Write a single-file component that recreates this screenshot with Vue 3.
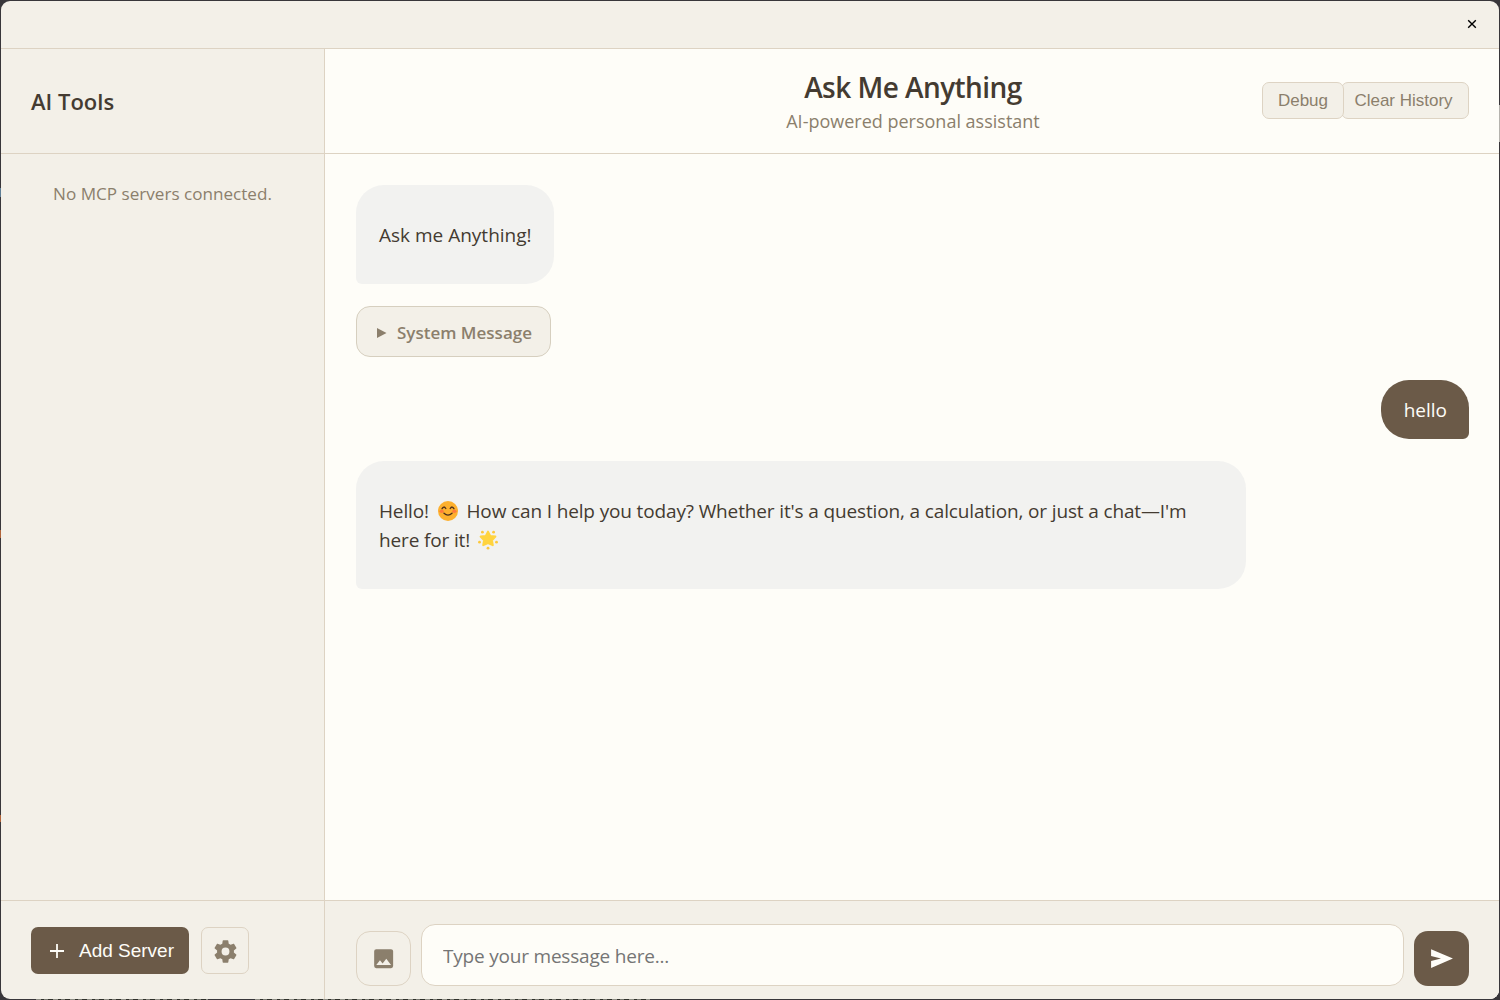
<script setup>
import { ref } from 'vue'

const draft = ref('')
</script>

<template>
  <div class="desktop">
    <div class="window">
      <div class="titlebar">
        <button class="close" aria-label="Close">
          <svg width="10" height="10" viewBox="0 0 10 10"><path d="M1.2 1.2 8.8 8.8M8.8 1.2 1.2 8.8" /></svg>
        </button>
      </div>

      <div class="body">
        <aside class="sidebar">
          <header class="side-head"><h2>AI Tools</h2></header>
          <div class="servers"><p>No MCP servers connected.</p></div>
          <footer class="side-foot">
            <button class="add">
              <svg width="14" height="14" viewBox="0 0 14 14"><path d="M7 0V14M0 7H14" /></svg>
              <span>Add Server</span>
            </button>
            <button class="gear" aria-label="Settings">
              <svg width="27" height="27" viewBox="0 0 24 24"><path d="M12,15.5A3.5,3.5 0 0,1 8.5,12A3.5,3.5 0 0,1 12,8.5A3.5,3.5 0 0,1 15.5,12A3.5,3.5 0 0,1 12,15.5M19.43,12.97C19.47,12.65 19.5,12.33 19.5,12C19.5,11.67 19.47,11.34 19.43,11L21.54,9.37C21.73,9.22 21.78,8.95 21.66,8.73L19.66,5.27C19.54,5.05 19.27,4.96 19.05,5.05L16.56,6.05C16.04,5.66 15.5,5.32 14.87,5.07L14.5,2.42C14.46,2.18 14.25,2 14,2H10C9.75,2 9.54,2.18 9.5,2.42L9.13,5.07C8.5,5.32 7.96,5.66 7.44,6.05L4.95,5.05C4.73,4.96 4.46,5.05 4.34,5.27L2.34,8.73C2.21,8.95 2.27,9.22 2.46,9.37L4.57,11C4.53,11.34 4.5,11.67 4.5,12C4.5,12.33 4.53,12.65 4.57,12.97L2.46,14.63C2.27,14.78 2.21,15.05 2.34,15.27L4.34,18.73C4.46,18.95 4.73,19.03 4.95,18.95L7.44,17.94C7.96,18.34 8.5,18.68 9.13,18.93L9.5,21.58C9.54,21.82 9.75,22 10,22H14C14.25,22 14.46,21.82 14.5,21.58L14.87,18.93C15.5,18.67 16.04,18.34 16.56,17.94L19.05,18.95C19.27,19.03 19.54,18.95 19.66,18.73L21.66,15.27C21.78,15.05 21.73,14.78 21.54,14.63L19.43,12.97Z" /></svg>
            </button>
          </footer>
        </aside>

        <main class="chat">
          <header class="chat-head">
            <div class="heading">
              <h1>Ask Me Anything</h1>
              <p>AI-powered personal assistant</p>
            </div>
            <div class="actions">
              <button class="debug">Debug</button>
              <button class="clear">Clear History</button>
            </div>
          </header>

          <section class="messages">
            <div class="bubble bot"><p>Ask me Anything!</p></div>
            <div class="system">
              <svg width="10" height="10" viewBox="0 0 10 10"><path d="M0 0 9.5 5 0 10Z" /></svg>
              <span>System Message</span>
            </div>
            <div class="bubble user">hello</div>
            <div class="bubble bot">
              <p class="long">Hello! <svg class="emoji smile" width="20" height="20" viewBox="0 0 20 20">
                <circle cx="10" cy="10" r="10" fill="#fdb02e" />
                <ellipse cx="3.7" cy="10.3" rx="2.2" ry="1.6" fill="#ff7a3d" />
                <ellipse cx="16.3" cy="10.3" rx="2.2" ry="1.6" fill="#ff7a3d" />
                <path d="M4 7.8Q5.8 4.4 7.8 7.5M12.2 7.5Q14.2 4.4 16 7.8M6 12.2Q10 16 14 12.2" fill="none" stroke="#4a2d1c" stroke-width="1.3" stroke-linecap="round" />
              </svg> How can I help you today? Whether it's a question, a calculation, or just a chat—I'm<br>
              here for it! <svg class="emoji" width="20" height="20" viewBox="0 0 20 20">
                <g fill="#ffd43f" stroke="#ffd43f" stroke-width="2" stroke-linejoin="round">
                  <path d="M10 1.6 12.2 6 17.4 6.6 13.9 10.2 14.8 15.2 10 13 5.2 15.2 6.1 10.2 2.6 6.6 7.8 6Z" />
                </g>
                <g fill="#fdc83a">
                  <circle cx="4.4" cy="2.2" r="1.4" /><circle cx="15.6" cy="2.2" r="1.4" />
                  <circle cx="1.5" cy="12.2" r="1.4" /><circle cx="18.5" cy="12.2" r="1.4" />
                  <circle cx="10" cy="18.2" r="1.4" />
                </g>
              </svg></p>
            </div>
          </section>

          <footer class="composer">
            <button class="image" aria-label="Attach image">
              <svg width="25.3" height="25.3" viewBox="0 0 24 24"><path d="M8.5,13.5L11,16.5L14.5,12L19,18H5M21,19V5C21,3.89 20.1,3 19,3H5A2,2 0 0,0 3,5V19A2,2 0 0,0 5,21H19A2,2 0 0,0 21,19Z" /></svg>
            </button>
            <input v-model="draft" type="text" placeholder="Type your message here...">
            <button class="send" aria-label="Send">
              <svg width="25" height="25" viewBox="0 0 24 24"><path d="M2,21 23,12 2,3V9.6L11.5,12 2,14.4Z" /></svg>
            </button>
          </footer>
        </main>
      </div>
    </div>
  </div>
</template>

<style>
body {
  margin: 0;
  overflow: hidden;
}
</style>

<style scoped>
* {
  box-sizing: border-box;
}

.desktop {
  height: 1000px;
  padding: 1px;
  background:
    linear-gradient(#b5b3ae, #b5b3ae) right 0 top 105px / 1px 37px no-repeat,
    linear-gradient(#5f7f96, #5f7f96) 0 188px / 1px 9px no-repeat,
    linear-gradient(#b0643a, #b0643a) 0 530px / 1px 8px no-repeat,
    linear-gradient(#b0643a, #b0643a) 0 815px / 1px 7px no-repeat,
    repeating-linear-gradient(90deg, #8d8d84 0 5px, #2f302a 5px 8px, #77776f 8px 12px, #2f302a 12px 17px) 36px 999px / 172px 1px no-repeat,
    repeating-linear-gradient(90deg, #8d8d84 0 5px, #2f302a 5px 8px, #77776f 8px 12px, #2f302a 12px 17px) 255px 999px / 395px 1px no-repeat,
    #38363a;
  font-family: "Open Sans", "Noto Sans", sans-serif;
  color: #443b31;
}

.window {
  display: flex;
  flex-direction: column;
  height: 998px;
  border-radius: 9px;
  overflow: hidden;
  background: #f3f0e8;
}

.titlebar {
  display: flex;
  align-items: center;
  justify-content: flex-end;
  flex: none;
  height: 48px;
  padding: 0 22px 2px 0;
  border-bottom: 1px solid #ddd3c3;
}

button {
  display: flex;
  align-items: center;
  justify-content: center;
  margin: 0;
  padding: 0;
  border: 1px solid #ddd3c3;
  background: #f3f0e8;
  color: #8b7f6c;
  font-family: "Liberation Sans", Arial, sans-serif;
}

svg {
  flex: none;
  fill: currentColor;
}

.close {
  width: 10px;
  height: 10px;
  border: 0;
  color: #000;
}

.close path,
.add path {
  fill: none;
  stroke: currentColor;
  stroke-width: 1.8;
}

.close path {
  stroke-width: 1.4;
}

.body {
  display: flex;
  flex: 1;
  min-height: 0;
}

.sidebar {
  display: flex;
  flex-direction: column;
  flex: none;
  width: 324px;
  border-right: 1px solid #ddd3c3;
}

.side-head {
  display: flex;
  align-items: center;
  height: 105px;
  padding: 0 30px 1px;
  border-bottom: 1px solid #ddd3c3;
}

h1,
h2,
p {
  margin: 0;
}

h2 {
  font-size: 22px;
  font-weight: 600;
}

.servers {
  flex: 1;
  padding-top: 27px;
  text-align: center;
  font-size: 17.1px;
  line-height: 25px;
  color: #8b7f6c;
}

.side-foot {
  display: flex;
  gap: 12px;
  height: 99px;
  padding: 26px 30px;
  border-top: 1px solid #ddd3c3;
}

.add {
  gap: 15px;
  width: 158px;
  height: 47px;
  padding-left: 4px;
  border: 0;
  border-radius: 7px;
  background: #6b5a48;
  color: #fefdf8;
  font-size: 19px;
}

.gear {
  width: 48px;
  height: 47px;
  padding-top: 1px;
  border-radius: 7px;
}

.chat {
  display: flex;
  flex-direction: column;
  flex: 1;
  min-width: 0;
  background: #fefdf8;
}

.chat-head {
  display: grid;
  grid-template-columns: 1fr auto 1fr;
  align-items: center;
  flex: none;
  height: 105px;
  padding: 0 29px 0 31px;
  border-bottom: 1px solid #ddd3c3;
}

.heading {
  grid-column: 2;
  text-align: center;
}

h1 {
  padding-top: 1px;
  font-size: 28px;
  font-weight: 600;
  line-height: 38px;
  letter-spacing: -0.55px;
}

.heading p {
  padding-top: 1px;
  font-size: 18px;
  line-height: 28px;
  color: #8b7f6c;
}

.actions {
  display: flex;
  justify-self: end;
  margin: -2px 1px 0 0;
}

.actions button {
  height: 37px;
  padding-top: 1px;
  border-radius: 7px;
  font-size: 17px;
}

.actions .debug {
  position: relative;
  z-index: 1;
  width: 82px;
}

.actions .clear {
  width: 128px;
  margin-left: -3px;
  padding-right: 3px;
}

.messages {
  display: flex;
  flex-direction: column;
  align-items: flex-start;
  flex: 1;
  padding: 31px 30px 0 31px;
}

.bubble {
  padding: 16px 22px 14px 23px;
  border-radius: 28px;
  font-size: 19px;
  line-height: 29px;
}

.bot {
  padding: 36px 22px 34px 23px;
  border-bottom-left-radius: 6px;
  background: #f2f2f0;
}

.user {
  align-self: flex-end;
  margin: 23px 0 22px;
  border-bottom-right-radius: 6px;
  background: #6b5a48;
  color: #fefdf8;
}

.long {
  width: 845px;
  white-space: nowrap;
  letter-spacing: -0.14px;
}

.emoji {
  margin: 0 4px 0 3px;
  vertical-align: -3px;
}

.smile {
  margin-left: 4px;
}

.system {
  display: flex;
  align-items: center;
  gap: 10px;
  width: 195px;
  height: 51px;
  margin-top: 22px;
  padding: 2px 0 0 20px;
  border: 1px solid #d6cfbf;
  border-radius: 14px;
  background: #f3f0e8;
  color: #8b7f6c;
  font-size: 17px;
  font-weight: 600;
}

.composer {
  display: flex;
  align-items: flex-end;
  gap: 10px;
  flex: none;
  height: 99px;
  padding: 0 30px 13px 31px;
  border-top: 1px solid #ddd3c3;
  background: #f3f0e8;
}

.composer button {
  width: 55px;
  height: 55px;
  border-radius: 14px;
}

.composer .send {
  border: 0;
  background: #6b5a48;
  color: #fefdf8;
}

input {
  flex: 1;
  height: 62px;
  min-width: 0;
  padding: 1px 21px 0;
  border: 1px solid #ddd3c3;
  border-radius: 14px;
  background: #fefdf8;
  font-family: inherit;
  font-size: 19px;
  letter-spacing: -0.2px;
}

input::placeholder {
  color: #757575;
  opacity: 1;
}
</style>
